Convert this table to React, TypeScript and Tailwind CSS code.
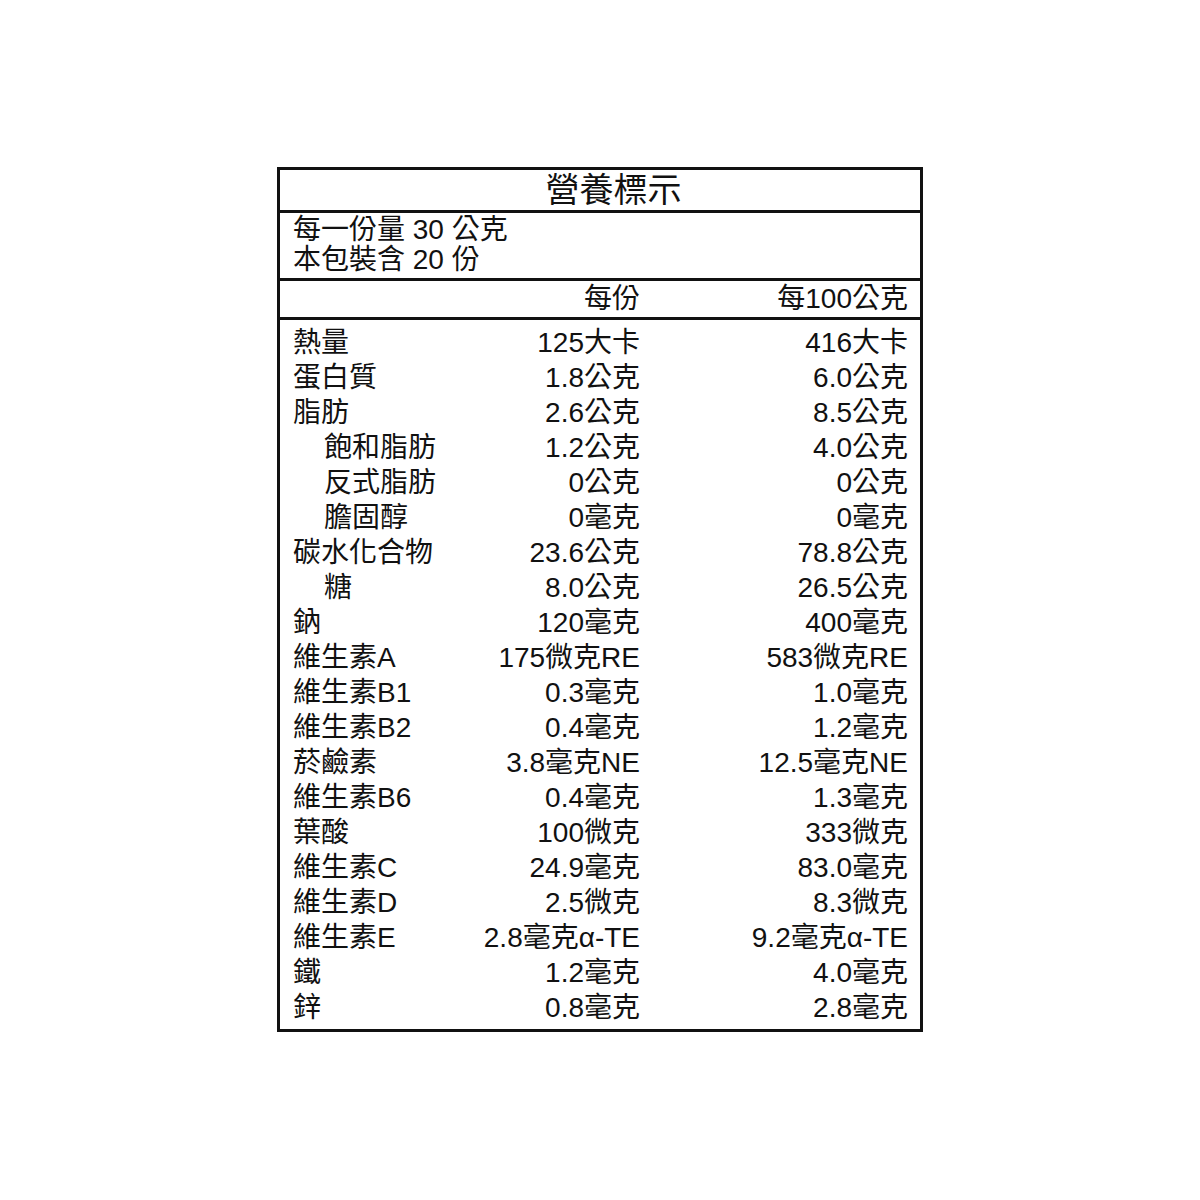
const ROWS: { label: string; indent?: boolean; perServing: string; per100: string }[] = [
  { label: '熱量', perServing: '125大卡', per100: '416大卡' },
  { label: '蛋白質', perServing: '1.8公克', per100: '6.0公克' },
  { label: '脂肪', perServing: '2.6公克', per100: '8.5公克' },
  { label: '飽和脂肪', indent: true, perServing: '1.2公克', per100: '4.0公克' },
  { label: '反式脂肪', indent: true, perServing: '0公克', per100: '0公克' },
  { label: '膽固醇', indent: true, perServing: '0毫克', per100: '0毫克' },
  { label: '碳水化合物', perServing: '23.6公克', per100: '78.8公克' },
  { label: '糖', indent: true, perServing: '8.0公克', per100: '26.5公克' },
  { label: '鈉', perServing: '120毫克', per100: '400毫克' },
  { label: '維生素A', perServing: '175微克RE', per100: '583微克RE' },
  { label: '維生素B1', perServing: '0.3毫克', per100: '1.0毫克' },
  { label: '維生素B2', perServing: '0.4毫克', per100: '1.2毫克' },
  { label: '菸鹼素', perServing: '3.8毫克NE', per100: '12.5毫克NE' },
  { label: '維生素B6', perServing: '0.4毫克', per100: '1.3毫克' },
  { label: '葉酸', perServing: '100微克', per100: '333微克' },
  { label: '維生素C', perServing: '24.9毫克', per100: '83.0毫克' },
  { label: '維生素D', perServing: '2.5微克', per100: '8.3微克' },
  { label: '維生素E', perServing: '2.8毫克α-TE', per100: '9.2毫克α-TE' },
  { label: '鐵', perServing: '1.2毫克', per100: '4.0毫克' },
  { label: '鋅', perServing: '0.8毫克', per100: '2.8毫克' },
];

export default function App() {
  return (
    <div className="min-h-[1200px] bg-white pl-[277px] pt-[167px] font-['Liberation_Sans','Noto_Sans_CJK_TC',sans-serif] text-[#111]">
      <div className="w-[646px] border-[3px] border-[#111]">
        {/* title */}
        <div className="flex h-[43px] items-center justify-center border-b-[3px] border-[#111] pl-[27px] text-[34px] leading-none">
          營養標示
        </div>

        {/* serving info */}
        <div className="h-[68px] border-b-[3px] border-[#111] pl-[13px] pt-[2px] text-[28px] leading-[30px]">
          <p>每一份量 30 公克</p>
          <p>本包裝含 20 份</p>
        </div>

        {/* column header */}
        <div className="grid h-[39px] grid-cols-[1fr_200px_268px] items-center border-b-[3px] border-[#111] pl-[13px] pr-[12px] text-[28px] leading-none">
          <span />
          <span className="text-right">每份</span>
          <span className="text-right">每100公克</span>
        </div>

        {/* nutrients */}
        <div className="pb-[4px] pl-[13px] pr-[12px] pt-[5px] text-[28px]">
          {ROWS.map((row) => (
            <div key={row.label} className="grid h-[35px] grid-cols-[1fr_200px_268px] items-center leading-none">
              <span className={row.indent ? 'whitespace-nowrap pl-[31px]' : 'whitespace-nowrap'}>{row.label}</span>
              <span className="whitespace-nowrap text-right">{row.perServing}</span>
              <span className="whitespace-nowrap text-right">{row.per100}</span>
            </div>
          ))}
        </div>
      </div>
    </div>
  );
}
